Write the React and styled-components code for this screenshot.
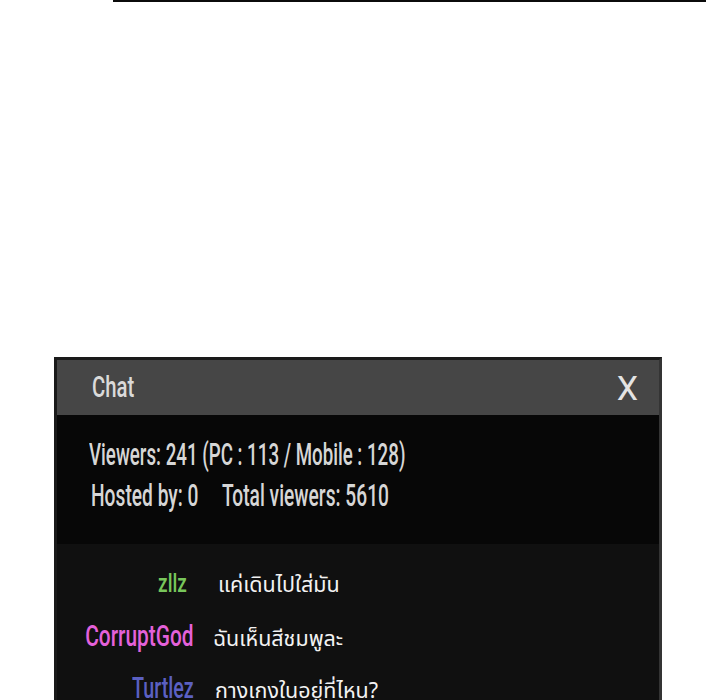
import styled, { createGlobalStyle } from "styled-components";

const GlobalStyle = createGlobalStyle`
	html, body {
		margin: 0;
		padding: 0;
		background: #ffffff;
		overflow: hidden;
	}
`;

const Page = styled.div`
	width: 720px;
	height: 700px;
	overflow: hidden;
	display: flex;
	flex-direction: column;
	font-family: Roboto, "Liberation Sans", sans-serif;
`;

const TopRule = styled.div`
	flex: none;
	margin-left: 113px;
	width: 593px;
	height: 2px;
	background-color: #0b0b0b;
`;

const Panel = styled.div`
	margin: 355px 0 0 54px;
	width: 602px;
	flex: none;
	height: 400px;
	display: flex;
	flex-direction: column;
	border: 3px solid #1a1a1a;
	border-right-color: #343434;
	border-bottom: none;
	background-color: #101010;
`;

const Header = styled.div`
	height: 55px;
	flex: none;
	display: flex;
	align-items: center;
	justify-content: space-between;
	padding: 0 21px 0 35px;
	background-color: #464646;
`;

const Condensed = styled.span`
	display: inline-block;
	white-space: nowrap;
	transform: scaleX(${p => p.$scale});
	transform-origin: ${p => (p.$right ? "right" : "left")} center;
`;

const Title = styled.div`
	font-size: 29px;
	font-weight: 500;
	color: #dadada;
	line-height: 1;
`;

const Close = styled.div`
	font-size: 34px;
	font-weight: 400;
	color: #e4e4e4;
	line-height: 1;
	cursor: pointer;
`;

const Stats = styled.div`
	height: 129px;
	flex: none;
	box-sizing: border-box;
	padding: 19px 0 0 32px;
	background-color: #070707;
`;

const StatLine = styled.div`
	font-size: 32px;
	font-weight: 500;
	line-height: 41px;
	color: #d6d6d6;
	padding-left: ${p => p.$indent || 0}px;
`;

const ChatList = styled.div`
	padding-top: 14px;
	display: flex;
	flex-direction: column;
`;

const Row = styled.div`
	height: 52px;
	display: flex;
	align-items: baseline;
	line-height: 52px;
`;

const Name = styled.div`
	width: 137px;
	flex: none;
	display: flex;
	justify-content: flex-end;
	font-size: ${p => p.$size}px;
	font-weight: 500;
	color: ${p => p.$color};
	padding-right: ${p => p.$inset || 0}px;
	box-sizing: border-box;
`;

const Message = styled.div`
	margin-left: ${p => p.$gap}px;
	font-family: "Noto Sans Thai", "Noto Sans Thai UI", "Noto Sans", "DejaVu Sans", sans-serif;
	font-size: 21.5px;
	color: #f2f2f2;
	white-space: nowrap;
`;

const messages = [
	{ name: "zllz", color: "#78c65b", size: 25, inset: 7, gap: 24, scale: 0.76, text: "แค่เดินไปใส่มัน" },
	{ name: "CorruptGod", color: "#e461da", size: 29, inset: 0, gap: 19, scale: 0.72, text: "ฉันเห็นสีชมพูละ" },
	{ name: "Turtlez", color: "#5b60c2", size: 29, inset: 0, gap: 21, scale: 0.68, text: "กางเกงในอยู่ที่ไหน?" },
];

function App() {
	return (
		<>
			<GlobalStyle />
			<Page>
				<TopRule />
				<Panel>
					<Header>
						<Title>
							<Condensed $scale={0.7}>Chat</Condensed>
						</Title>
						<Close>X</Close>
					</Header>
					<Stats>
						<StatLine>
							<Condensed $scale={0.585}>Viewers: 241 (PC : 113 / Mobile : 128)</Condensed>
						</StatLine>
						<StatLine $indent={2}>
							<Condensed $scale={0.6}>Hosted by: 0&nbsp;&nbsp;&nbsp;&nbsp; Total viewers: 5610</Condensed>
						</StatLine>
					</Stats>
					<ChatList>
						{messages.map(m => (
							<Row key={m.name}>
								<Name $size={m.size} $color={m.color} $inset={m.inset}>
									<Condensed $scale={m.scale} $right>
										{m.name}
									</Condensed>
								</Name>
								<Message $gap={m.gap}>{m.text}</Message>
							</Row>
						))}
					</ChatList>
				</Panel>
			</Page>
		</>
	);
}

export default App;
